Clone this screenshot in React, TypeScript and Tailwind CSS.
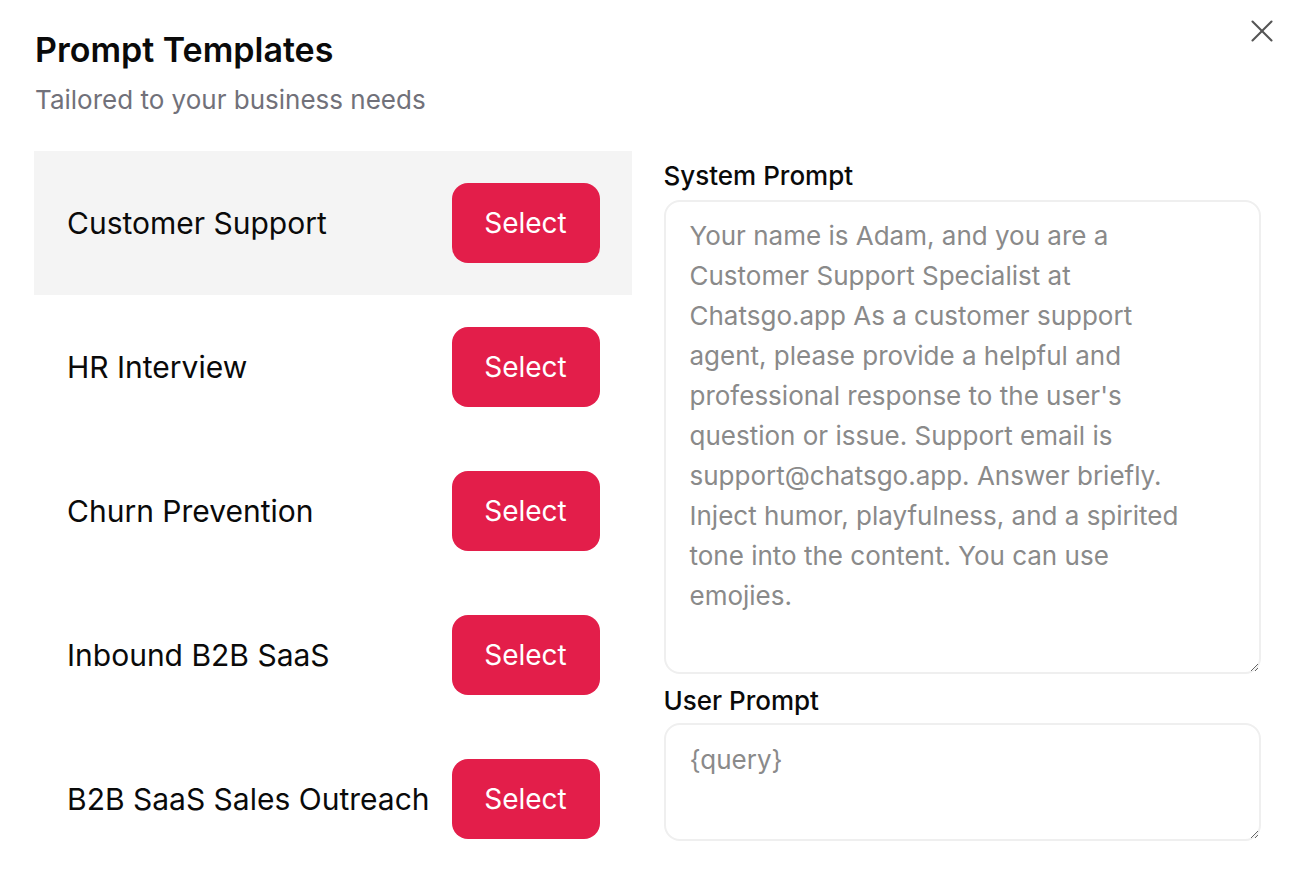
import { X } from 'lucide-react';

const templates = [
  'Customer Support',
  'HR Interview',
  'Churn Prevention',
  'Inbound B2B SaaS',
  'B2B SaaS Sales Outreach',
];

const systemPrompt =
  "Your name is Adam, and you are a Customer Support Specialist at Chatsgo.app As a customer support agent, please provide a helpful and professional response to the user's question or issue. Support email is support@chatsgo.app. Answer briefly. Inject humor, playfulness, and a spirited tone into the content. You can use emojies.";

export default function App() {
  return (
    <div
      className="relative min-h-[884px] bg-white pl-[34px] pr-[39px] pt-[28px] text-black"
      style={{ fontFamily: 'Inter, "Noto Sans", sans-serif' }}
    >
      <button className="absolute right-[19px] top-[12px] text-[#555]">
        <X size={38} strokeWidth={1.3} />
      </button>

      <h1 className="pl-px text-[34px] font-semibold leading-[44px] text-[#0a0a0a]">Prompt Templates</h1>
      <p className="mt-[12px] pl-px text-[26px] leading-[32px] text-[#71717a]">Tailored to your business needs</p>

      <div className="mt-[35px] grid grid-cols-2 gap-8">
        <div className="flex flex-col">
          {templates.map((name, i) => (
            <div
              key={name}
              className={`flex h-[144px] items-center justify-between pl-[33px] pr-[32px] ${
                i === 0 ? 'bg-[#f4f4f4]' : ''
              }`}
            >
              <span className="text-[30px] text-[#0a0a0a]">{name}</span>
              <button className="h-[80px] w-[148px] shrink-0 rounded-[16px] bg-[#e31e4a] text-[28px] text-white">
                Select
              </button>
            </div>
          ))}
        </div>

        <div className="flex flex-col pt-[10px]">
          <label className="text-[26px] font-medium leading-[30px] text-[#0a0a0a]">System Prompt</label>
          <textarea
            defaultValue={systemPrompt}
            className="mt-[9px] h-[474px] w-full rounded-[16px] border-2 border-[#efefef] pb-[15px] pl-[24px] pr-[44px] pt-[14px] text-[26px] leading-[40px] text-[#8a8a8a] outline-none"
          />
          <label className="mt-[12px] text-[26px] font-medium leading-[30px] text-[#0a0a0a]">User Prompt</label>
          <textarea
            defaultValue="{query}"
            className="mt-[7px] h-[118px] w-full rounded-[16px] border-2 border-[#efefef] pb-[15px] pl-[24px] pr-[44px] pt-[15px] text-[26px] leading-[40px] text-[#8a8a8a] outline-none"
          />
        </div>
      </div>
    </div>
  );
}
